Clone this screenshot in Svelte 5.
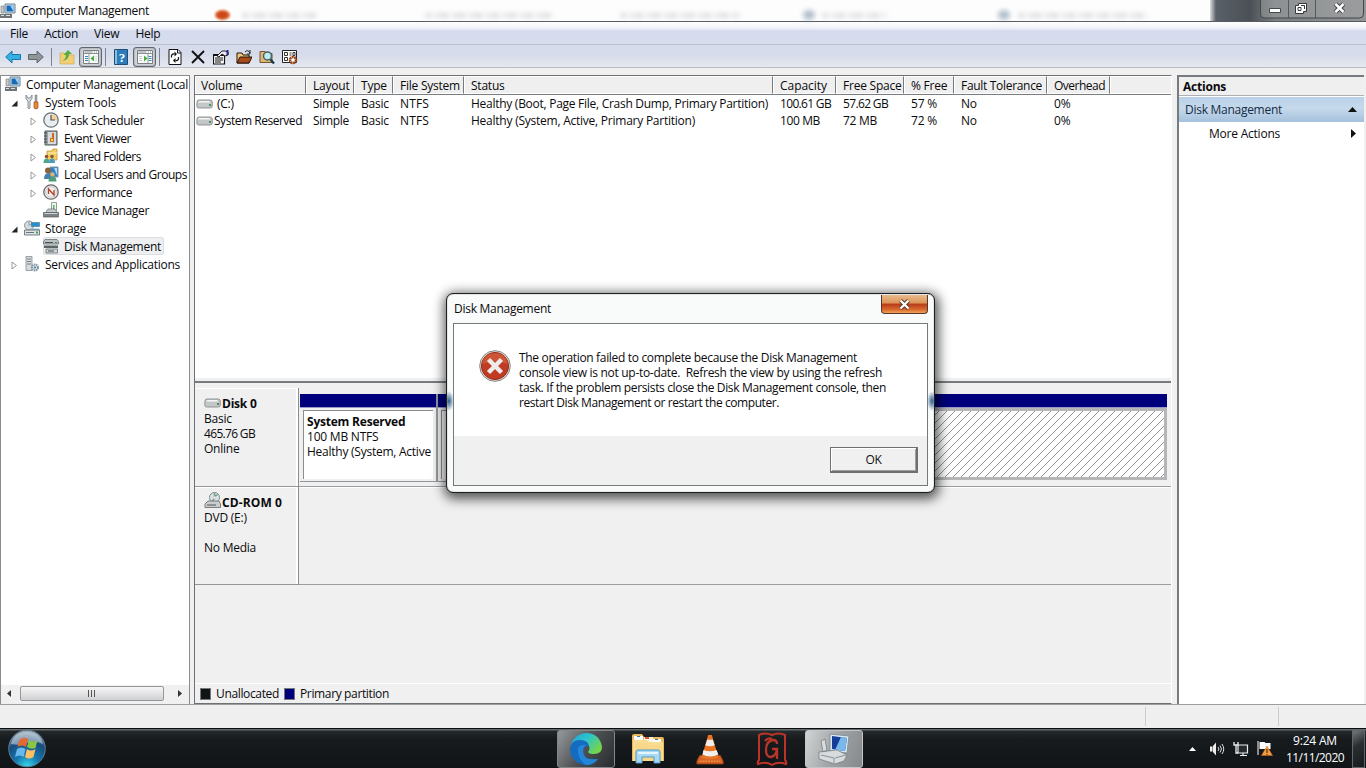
<script lang="ts">
	const menus = ['File', 'Action', 'View', 'Help'];

	const tree = [
		{ label: 'Computer Management (Local', icon: 'computer', level: 0, arrow: '' },
		{ label: 'System Tools', icon: 'tools', level: 1, arrow: 'open' },
		{ label: 'Task Scheduler', icon: 'clock', level: 2, arrow: 'closed' },
		{ label: 'Event Viewer', icon: 'event', level: 2, arrow: 'closed' },
		{ label: 'Shared Folders', icon: 'shared', level: 2, arrow: 'closed' },
		{ label: 'Local Users and Groups', icon: 'users', level: 2, arrow: 'closed' },
		{ label: 'Performance', icon: 'perf', level: 2, arrow: 'closed' },
		{ label: 'Device Manager', icon: 'device', level: 2, arrow: '' },
		{ label: 'Storage', icon: 'storage', level: 1, arrow: 'open' },
		{ label: 'Disk Management', icon: 'disks', level: 2, arrow: '', selected: true },
		{ label: 'Services and Applications', icon: 'services', level: 1, arrow: 'closed' }
	];

	const columns = ['Volume', 'Layout', 'Type', 'File System', 'Status', 'Capacity', 'Free Space', '% Free', 'Fault Tolerance', 'Overhead'];

	const volumes = [
		[' (C:)', 'Simple', 'Basic', 'NTFS', 'Healthy (Boot, Page File, Crash Dump, Primary Partition)', '100.61 GB', '57.62 GB', '57 %', 'No', '0%'],
		['System Reserved', 'Simple', 'Basic', 'NTFS', 'Healthy (System, Active, Primary Partition)', '100 MB', '72 MB', '72 %', 'No', '0%']
	];

	const message = [
		'The operation failed to complete because the Disk Management',
		'console view is not up-to-date.  Refresh the view by using the refresh',
		'task. If the problem persists close the Disk Management console, then',
		'restart Disk Management or restart the computer.'
	];

	const widths: Record<string, number> = {
		'Computer Management': 128,
		'Computer Management (Local': 162,
		'System Tools': 71,
		'Task Scheduler': 80,
		'Event Viewer': 67,
		'Shared Folders': 77,
		'Local Users and Groups': 123,
		Performance: 68,
		'Device Manager': 85,
		Storage: 41,
		'Disk Management': 97,
		'Services and Applications': 135,
		'File System': 60,
		'Fault Tolerance': 81,
		Overhead: 51,
		Capacity: 47,
		Simple: 36,
		NTFS: 29,
		[volumes[0][4]]: 297,
		[volumes[1][4]]: 224,
		'System Reserved': 88,
		'100.61 GB': 51,
		'57.62 GB': 45,
		'100 MB': 40,
		'72 MB': 34,
		'465.76 GB': 51,
		'CD-ROM 0': 60,
		'No Media': 52,
		Unallocated: 63,
		'Primary partition': 89,
		[message[0]]: 338,
		[message[1]]: 363,
		[message[2]]: 367,
		[message[3]]: 260,
		'9:24 AM': 44,
		'11/11/2020': 58
	};

	// Spreads the letters of a label over its width
	function fit(node: HTMLElement, text: string) {
		const width = widths[text];
		if (!width) return;
		const range = document.createRange();
		range.selectNodeContents(node);
		const base = parseFloat(getComputedStyle(node).letterSpacing) || 0;
		const spacing = base + (width - range.getBoundingClientRect().width) / text.length;
		node.style.letterSpacing = `${spacing.toFixed(3)}px`;
	}

	let dialogOpen = $state(true);
</script>

{#snippet label(text: string)}
	<span class="label" use:fit={text}>{text}</span>
{/snippet}

{#snippet icon(name: string)}
	<svg class="icon" viewBox="0 0 16 16" width="16" height="16" aria-hidden="true">
		{#if name === 'computer'}
			<path d="M5 1h10v9H5z" fill="#d8e4ee" stroke="#68808f" />
			<path d="M6.500 2.500h7v6h-7z" fill="#1769b9" />
			<path d="M10 2.500h3.500v6z" fill="#9bd1f2" />
			<path d="M1 3h3v7H1z" fill="#c5c9cb" stroke="#777" stroke-width=".6" />
			<path d="M0 11h12v4H0z" fill="#6c7477" />
			<path d="M1 12h3v1H1zM6 12h4v1H6z" fill="#dce0e2" />
		{:else if name === 'tools'}
			<path d="M2 1v4l2 2v7q1 2 2 0V7l2-2V1L6 4H4z" fill="#d8dcde" stroke="#747c80" stroke-width=".8" />
			<path d="M11 1h2v7h-2z" fill="#a2a8aa" stroke="#777" stroke-width=".5" />
			<path d="M10 8h4v6q-2 2-4 0z" fill="#e58a37" stroke="#9b4f1c" stroke-width=".7" />
		{:else if name === 'clock'}
			<circle cx="8" cy="8" r="7.200" fill="#e8edef" stroke="#6b7276" stroke-width="1.300" />
			<path d="M8 8V2a6 6 0 0 1 6 6z" fill="#f7cf93" />
			<path d="M8 3v5h4" fill="none" stroke="#455865" stroke-width="1.200" />
		{:else if name === 'event'}
			<path d="M2 1h12v14H2z" fill="#9ba3a7" stroke="#555d61" />
			<path d="M5 2h8v12H5z" fill="#d6dadb" />
			<path d="M1 3h3M1 6h3M1 9h3M1 12h3" stroke="#3e4447" />
			<path d="M9 3h2v5H9zM7 8h4v4H7z" fill="#d26a1e" />
			<path d="M8 9h2v2H8z" fill="#ffdf73" />
		{:else if name === 'shared'}
			<path d="M4 3h5l1-2h4v11H4z" fill="#f4cc62" stroke="#c69a3a" stroke-width=".8" />
			<path d="M5 5h9" stroke="#fff0b0" />
			<circle cx="3.500" cy="8.500" r="1.800" fill="#8a5730" />
			<circle cx="9" cy="8.500" r="1.800" fill="#8a5730" />
			<path d="M.5 15q0-4.500 3-4.500t3 4.500z" fill="#4ba68a" />
			<path d="M6 15q0-4.500 3-4.500t3 4.500z" fill="#4c97c4" />
		{:else if name === 'users'}
			<path d="M7 1h8v10H7z" fill="#2f83cb" stroke="#8496a2" />
			<path d="M11 2h3v7z" fill="#b2def6" />
			<circle cx="5" cy="4.500" r="3" fill="#8a6238" />
			<path d="M1 13q0-6 4.500-6t5 6z" fill="#477fae" />
			<circle cx="9.500" cy="8.500" r="2.200" fill="#ddb276" />
			<path d="M5.500 15.500q0-5 4-5t4 5z" fill="#4e9c78" />
		{:else if name === 'perf'}
			<circle cx="8" cy="8" r="7.200" fill="#f2eeee" stroke="#6c6a6a" stroke-width="1.300" />
			<circle cx="8" cy="8" r="5.300" fill="none" stroke="#ccc" />
			<path d="M5.500 10V5l5.500 6V6" fill="none" stroke="#b34127" stroke-width="1.300" />
		{:else if name === 'device'}
			<path d="M8.500.5h5v8h-5z" fill="#eef6ed" stroke="#88a58c" />
			<path d="M10 3h1.500v5H10z" fill="#62ad6d" />
			<path d="M3 10l2-3h7l2 3v1H3z" fill="#c3c8ca" stroke="#6a7174" stroke-width=".7" />
			<path d="M.500 10.500h15V15H.5z" fill="#7b8386" stroke="#53595c" stroke-width=".7" />
			<path d="M1.500 11.500h13" stroke="#cfd5d6" />
		{:else if name === 'storage'}
			<circle cx="5" cy="5.500" r="4.500" fill="#d3dadd" stroke="#777f83" stroke-width=".8" />
			<path d="M5 1.500v4l3-2" fill="none" stroke="#93a9b3" />
			<path d="M7.500 2.500h8v4h-8z" fill="#268fcf" stroke="#456e89" stroke-width=".6" />
			<path d="M8 8.500h7.500v3H8z" fill="#8db7d2" />
			<path d="M.5 10h15v5H.5z" fill="#dce1e3" stroke="#596268" stroke-width=".8" />
			<path d="M2 12h8v1H2z" fill="#687278" />
			<path d="M12 11.500h2v2h-2z" fill="#35a84c" />
		{:else if name === 'disks'}
			<path d="M2 1.500h12l1.500 2v2.500H.5V3.500z" fill="#bcc2c4" stroke="#585f62" stroke-width=".7" />
			<path d="M1 7.500h14v2.500H1z" fill="#5c6467" />
			<path d="M3 11h11.500v4H3z" fill="#d1d6d8" stroke="#585f62" stroke-width=".7" />
			<path d="M2 4.500h8M5 13h6" stroke="#495054" />
			<path d="M12 4h2v1h-2z" fill="#309a44" />
		{:else if name === 'services'}
			<path d="M2 .5h6v14H2z" fill="#d6dbdd" stroke="#7a8387" stroke-width=".7" />
			<path d="M3 3h4M3 5.500h4M3 8h4" stroke="#788186" />
			<circle cx="11" cy="11.500" r="3" fill="#dce8ee" stroke="#7f98a8" stroke-width="2" stroke-dasharray="1.500 .6" />
			<circle cx="11" cy="11.500" r="1" fill="#526c7c" />
		{:else if name === 'back' || name === 'forward'}
			<path
				d="M0.700 8L7 2v3.500h8.500v5H7V14z"
				transform={name === 'forward' ? 'translate(16) scale(-1 1)' : undefined}
				fill={name === 'back' ? '#35b0e5' : '#8f969a'}
				stroke={name === 'back' ? '#1d74ab' : '#5f666a'}
			/>
		{:else if name === 'up'}
			<path d="M1 4h4l2 2h8v9H1z" fill="#f1cf76" stroke="#cfab51" stroke-width=".7" />
			<path d="M3 12q4-2 4-6H4.500L9 1l4 4h-3q0 6-7 7" fill="#59ad3d" />
		{:else if name === 'panel-left' || name === 'panel-right'}
			<path d="M.5 1.500h15v13H.5z" fill="#f9fafa" stroke="#798084" />
			<path d="M1 4.500h14M11 3h1m1 0h1M1.500 3h8" stroke="#8b9296" />
			<path d="M2 7.500h3M2 9.500h3M2 11.500h3" stroke={name === 'panel-left' ? '#3489c4' : '#ccc'} />
			<path d="M11.500 7.500h3M11.500 9.500h3M11.500 11.500h3" stroke={name === 'panel-left' ? '#ddd' : '#3489c4'} />
			<path d={name === 'panel-left' ? 'M11 6.500v6l-3.500-3z' : 'M7 6.500v6l3.500-3z'} fill="#43ae3d" />
			<path d={name === 'panel-left' ? 'M6 5v9' : 'M11 5v9'} stroke="#999" />
		{:else if name === 'help'}
			<path d="M1.500.5h13v15h-13z" fill="#2c7cbc" stroke="#214d7b" />
			<path d="M2 1h2v14H2z" fill="#88bee0" />
			<text x="9" y="12.500" text-anchor="middle" class="question">?</text>
		{:else if name === 'refresh'}
			<path d="M2 .5h9l3 3v12H2z" fill="#fff" stroke="#111" />
			<path d="M10.500.5V4H14" fill="none" stroke="#111" />
			<path d="M4.500 8.500q-.5-4 3-3.500M11.500 8q.5 4-3 3.500" fill="none" stroke="#111" stroke-width="1.200" />
			<path d="M7.500 2.500v5l2.500-2.500zM8.500 9v5L6 11.500z" fill="#111" />
		{:else if name === 'delete'}
			<path d="M2 2l12 12M14 2L2 14" stroke="#111" stroke-width="1.900" />
		{:else if name === 'properties'}
			<path d="M.5 5.500h11v9.500H.5z" fill="#fff" stroke="#111" stroke-width="1.200" />
			<path d="M1 6.500h10M2 9h8M2 11h8M2 13h6" stroke="#111" stroke-width="1.200" />
			<path d="M4 7l5-5h3l3 1v3l-3 1-3-2-3 3z" fill="#eceaf0" stroke="#222" />
			<path d="M13.500 1h2v5h-2z" fill="#28248b" />
		{:else if name === 'open'}
			<path d="M1 4h5l1 2h6v8H1z" fill="#f0c67e" stroke="#251408" />
			<path d="M1 14l3-6h12l-3 6z" fill="#a94a18" stroke="#251408" />
			<path d="M9 3q3-3 5 1m0-3v4h-3" fill="none" stroke="#222" />
		{:else if name === 'search'}
			<path d="M1 2.500h5l1 2h6v9H1z" fill="#dfb675" stroke="#74532f" />
			<circle cx="8.500" cy="7" r="4" fill="#bcebf2" stroke="#476066" stroke-width="1.500" />
			<path d="M11.500 10.500l3.500 4" stroke="#153a50" stroke-width="2.300" />
		{:else if name === 'settings'}
			<path d="M.5 1.500h14v12H.5z" fill="#fff" stroke="#222" />
			<path d="M2.500 3.500h3v3h-3zM2.500 8.500h3v3h-3zM7.500 4h2M7.500 6h2M11 3.500h2v3h-2z" fill="none" stroke="#333" />
			<circle cx="11" cy="11" r="3" fill="#fff" stroke="#94461c" stroke-width="2.500" stroke-dasharray="2 .5" />
		{/if}
	</svg>
{/snippet}

{#snippet drive(cd = false)}
	<svg class="drive" viewBox="0 0 17 16" width="17" height="16" aria-hidden="true">
		{#if cd}
			<circle cx="10.500" cy="5.500" r="5" fill="#dce5e4" stroke="#7d8989" />
			<path d="M10.500 1v3l3-1M10 7l-2 3" fill="none" stroke="#6fa487" stroke-width="1.500" />
			<circle cx="10.500" cy="5.500" r="1.300" fill="#fff" stroke="#8e9c9c" stroke-width=".5" />
			<path d="M1 12l3-3h11l1.500 3v3.500H1z" fill="#c8cccc" stroke="#626969" stroke-width=".8" />
			<path d="M3 13h9" stroke="#505858" />
		{:else}
			<path d="M1 6q0-2 2-2h11q2 0 2.300 2v4q0 2-2 2H2.500Q1 12 .8 10z" fill="#c4c7c7" stroke="#7c8080" stroke-width=".8" />
			<path d="M2 6.500q0-1.500 2-1.500h9q1 0 1 1.500z" fill="#f4f5f5" />
			<path d="M13 8h2v2h-2z" fill="#4d8f5d" />
		{/if}
	</svg>
{/snippet}

<div class="desktop">
	<header class="titlebar">
		{@render icon('computer')}
		{@render label('Computer Management')}
		<i class="ghost orange"></i>
		<i class="ghost g1"></i>
		<i class="ghost g2"></i>
		<i class="ghost g3"></i>
		<i class="ghost dot d1"></i>
		<i class="ghost g4"></i>
		<i class="ghost dot d2"></i>
		<i class="ghost g5"></i>
		<div class="glass">
			<svg width="104" height="19" viewBox="0 0 104 19" aria-hidden="true">
				<path d="M.5 0v14q0 4 4 4h95q4 0 4-4V0" fill="#a5a7a8" fill-opacity=".45" stroke="#42474a" />
				<path d="M28.500 0v18M55.500 0v18" stroke="#55595c" />
				<path d="M9.500 8.500h11v4h-11z" fill="#fff" stroke="#44494c" />
				<path d="M38.500 3.500h8v8h-3v2h-8v-8h3z" fill="#fff" stroke="#34393c" />
				<path d="M38 7.500h3v3h-3zM41 5.500h3.500V9" fill="none" stroke="#34393c" />
				<path d="M75.500 4l8 8m0-8l-8 8" stroke="#363b3e" stroke-width="4.500" />
				<path d="M75.500 4l8 8m0-8l-8 8" stroke="#fff" stroke-width="2.500" />
			</svg>
		</div>
	</header>

	<nav class="menubar">
		{#each menus as menu}
			<span>{menu}</span>
		{/each}
	</nav>

	<div class="toolbar">
		{@render icon('back')}
		<span class="second">{@render icon('forward')}</span>
		<i class="sep"></i>
		{@render icon('up')}
		<span class="pressed">{@render icon('panel-left')}</span>
		<i class="sep near"></i>
		{@render icon('help')}
		<span class="pressed">{@render icon('panel-right')}</span>
		<i class="sep near"></i>
		<div class="actions-icons">
			{#each ['refresh', 'delete', 'properties', 'open', 'search', 'settings'] as name}
				{@render icon(name)}
			{/each}
		</div>
	</div>

	<main class="workspace">
		<aside class="tree">
			<div class="nodes">
				{#each tree as node}
					<div class="node level{node.level}">
						<span class="twisty">
							{#if node.arrow === 'open'}
								<svg width="7" height="7" viewBox="0 0 7 7"><path d="M6.500.5v6h-6z" fill="#222" /></svg>
							{:else if node.arrow === 'closed'}
								<svg width="7" height="9" viewBox="0 0 7 9"><path d="M1 1v7l4.500-3.500z" fill="#fff" stroke="#999" /></svg>
							{/if}
						</span>
						<span class="item" class:selected={node.selected}>
							{@render icon(node.icon)}
							{@render label(node.label)}
						</span>
					</div>
				{/each}
			</div>
			<div class="scrollbar">
				<svg width="5" height="7" viewBox="0 0 5 7"><path d="M4 0v7L0 3.500z" fill="#333" /></svg>
				<div class="thumb"><i></i><i></i><i></i></div>
				<svg width="5" height="7" viewBox="0 0 5 7"><path d="M1 0v7l4-3.500z" fill="#333" /></svg>
			</div>
		</aside>

		<section class="center">
			<div class="volumes">
				<div class="row head">
					{#each columns as column}
						<span class="cell">{@render label(column)}</span>
					{/each}
					<span class="cell"></span>
				</div>
				{#each volumes as volume}
					<div class="row">
						{#each volume as value, i}
							<span class="cell">{#if i === 0}{@render drive()}{/if}{@render label(value)}</span>
						{/each}
					</div>
				{/each}
			</div>
			<div class="splitter"></div>
			<div class="disks">
				<div class="disk first">
					<div class="disk-info">
						<b>{@render drive()}{@render label('Disk 0')}</b>
						<span>Basic</span>
						{@render label('465.76 GB')}
						<span>Online</span>
					</div>
					<div class="partitions">
						<div class="partition reserved">
							<div class="band"></div>
							<div class="box">
								<b>System Reserved</b>
								<span>100 MB NTFS</span>
								<span class="status">Healthy (System, Active</span>
							</div>
						</div>
						<div class="partition system">
							<div class="band"></div>
							<div class="box"></div>
						</div>
						<div class="partition hatched">
							<div class="band"></div>
							<div class="box">
								<svg width="100%" height="100%">
									<defs>
										<pattern id="hatch" width="8" height="8" patternUnits="userSpaceOnUse">
											<path d="M-1 9L9-1M-1 1L1-1M7 9L9 7" stroke="#777" stroke-width=".8" />
										</pattern>
									</defs>
									<rect width="100%" height="100%" fill="url(#hatch)" />
								</svg>
							</div>
						</div>
					</div>
				</div>
				<div class="disk second-disk">
					<div class="disk-info">
						<b>{@render drive(true)}{@render label('CD-ROM 0')}</b>
						<span>DVD (E:)</span>
						<span>&nbsp;</span>
						{@render label('No Media')}
					</div>
					<div class="partitions empty"></div>
				</div>
			</div>
			<div class="legend">
				<i class="swatch black"></i>{@render label('Unallocated')}
				<i class="swatch navy"></i>{@render label('Primary partition')}
			</div>
		</section>

		<aside class="actions">
			<h2>Actions</h2>
			<div class="group">
				{@render label('Disk Management')}
				<svg width="9" height="5" viewBox="0 0 9 5"><path d="M0 5h9L4.500 0z" fill="#111" /></svg>
			</div>
			<div class="more">
				<span>More Actions</span>
				<svg width="5" height="9" viewBox="0 0 5 9"><path d="M0 0v9l5-4.500z" fill="#111" /></svg>
			</div>
		</aside>
	</main>

	<div class="statusbar"><i></i><i></i></div>

	<footer class="taskbar">
		<svg class="orb" width="40" height="39" viewBox="0 0 40 39" aria-hidden="true">
			<defs>
				<radialGradient id="orb" cx=".5" cy="1" r="1">
					<stop offset="0" stop-color="#38dcec" />
					<stop offset=".35" stop-color="#1677ae" />
					<stop offset=".7" stop-color="#184c7d" />
					<stop offset="1" stop-color="#a5b3bd" />
				</radialGradient>
			</defs>
			<circle cx="20" cy="19.500" r="18.300" fill="url(#orb)" stroke="#5d7d91" />
			<path d="M4 15q3-12 16-12t16 12q-8-4-16-1t-16 1" fill="#e2e8eb" opacity=".5" />
			<path d="M12.500 11q4.500-4 8.500-1l-2 8q-4-3-8.500 0z" fill="#e56a32" />
			<path d="M22 11q4 3 8.500 0l-2 8q-4.500 2-8.500-1z" fill="#8ac543" />
			<path d="M10 20q4.500-3 8.500 0l-2 8q-4-3-8.500 0z" fill="#69b9ee" />
			<path d="M20 20q4 3 8.500 0l-2 8q-4.500 3-8.500 0z" fill="#ffc065" />
		</svg>
		<div class="apps">
			<div class="app active">
				<svg width="34" height="34" viewBox="0 0 34 34" aria-hidden="true">
					<defs>
						<linearGradient id="edge" x1="0" x2="1" y2=".6">
							<stop offset="0" stop-color="#229ed8" />
							<stop offset=".5" stop-color="#2cc5cc" />
							<stop offset="1" stop-color="#76d448" />
						</linearGradient>
					</defs>
					<path d="M2 13Q6 1 18 1q13 1 15 14 0 7-8 7-5 0-6-2 3-4 0-7-6-5-17 0" fill="url(#edge)" />
					<path d="M1 17q1-9 10-9 8 0 9 6-6-1-6 6 1 9 15 7-5 7-13 6Q1 30 1 17" fill="#146bc0" />
					<path d="M9 16q-1 11 8 17 8 0 12-6-14 2-15-7 0-5 3-7-6-1-8 3" fill="#2386d8" />
				</svg>
			</div>
			<div class="app">
				<svg width="34" height="32" viewBox="0 0 34 32" aria-hidden="true">
					<path d="M1 3q0-2 2-2h8l2 3h18q2 0 2 2v22H1z" fill="#e7b95c" />
					<path d="M3 3h9v8H3z" fill="#fff" />
					<path d="M6 3h3v1H6z" fill="#397ca2" />
					<path d="M13 4h9v7h-9z" fill="#fff3e0" />
					<path d="M14 4h4v2h-4z" fill="#df5738" />
					<path d="M22 6h8v4h-8z" fill="#fff" />
					<path d="M24 6h3v1h-3z" fill="#397ca2" />
					<path d="M2 7h14l2 2h14v19H2z" fill="#fadd93" />
					<path d="M4 10h11l2 2h14v16H4z" fill="#f8d68a" />
					<path d="M5 19q0-2 2-2h20q2 0 2 2v11h-6v-6H11v6H5z" fill="#a9d8f4" stroke="#4d9ac7" />
					<path d="M7 19h20v2H7z" fill="#e3f6ff" />
				</svg>
			</div>
			<div class="app">
				<svg width="28" height="32" viewBox="0 0 30 34" aria-hidden="true">
					<path d="M4 24h22l3 6v3H1v-3z" fill="#d76423" stroke="#9f4319" />
					<path d="M13 2h4l7 24q-8 4-18 0z" fill="#e87426" />
					<path d="M12 7h6l2 6q-5 2-10 0zM8 18q7 3 14 0l2 5q-9 4-17 0z" fill="#f1efec" />
					<path d="M4 30h22" stroke="#ffa75c" stroke-dasharray="2 1" />
				</svg>
			</div>
			<div class="app">
				<svg width="32" height="34" viewBox="0 0 32 34" aria-hidden="true">
					<path d="M3 3q6-3 13 0 7-3 13 0v25q2 2 1 4-8-3-14 1-6-4-14-1-1-2 1-4z" fill="none" stroke="#bd3427" stroke-width="2" />
					<path d="M21 12q0-4-4-4-7 1-7 10 0 7 5 7 5-1 6-8h-5m5 0v10M9 9q3-4 7-2" fill="none" stroke="#b83528" stroke-width="2.300" />
				</svg>
			</div>
			<div class="app active bright">
				<svg width="34" height="32" viewBox="0 0 34 32" aria-hidden="true">
					<path d="M13 1l19 2-2 17-17-2z" fill="#dbe6ef" stroke="#8193a1" />
					<path d="M15 3l15 2-2 13-13-2z" fill="#153d99" />
					<path d="M24 4l6 1-2 13-10-1z" fill="#79b8eb" />
					<path d="M4 8l4-2 2 11-4 2zM2 19l18-2 10 5-3 6-9 3L2 26z" fill="#d8dcde" stroke="#797f82" stroke-width=".8" />
					<path d="M4 22l13 3v5M18 25l11-3" fill="none" stroke="#899195" />
				</svg>
			</div>
		</div>
		<div class="tray">
			<svg width="7" height="4" viewBox="0 0 7 4"><path d="M0 4h7L3.500 0z" fill="#fff" /></svg>
			<svg width="16" height="14" viewBox="0 0 16 14">
				<path d="M1 4.500h2.500v5H1zM4 4l3-3.500v13L4 10z" fill="#eee" />
				<path d="M9 5q2 2 0 4M11 3.500q3 3.500 0 7M13 2q3.500 5 0 10" fill="none" stroke="#ddd" />
			</svg>
			<svg width="16" height="14" viewBox="0 0 16 14">
				<path d="M5 3h9.500v8H5zM7 13.500h7M10 11v2" fill="#252b2e" stroke="#eee" stroke-width="1.200" />
				<path d="M1 0v3h4V0M3 3v8h2" fill="none" stroke="#eee" stroke-width="1.300" />
			</svg>
			<svg width="16" height="15" viewBox="0 0 16 15">
				<path d="M1 0v14" stroke="#fff" />
				<path d="M2.500 1h5l1 1h5v6h-11z" fill="#fff" />
				<path d="M10 5l5.500 9.500h-11z" fill="#f2a03f" stroke="#cc6920" stroke-width=".5" />
				<path d="M10 8v4m0 1v1" stroke="#643415" stroke-width="1.300" />
			</svg>
		</div>
		<div class="time">
			{@render label('9:24 AM')}
			{@render label('11/11/2020')}
		</div>
		<div class="show-desktop"></div>
	</footer>

	{#if dialogOpen}
		<div class="dialog" role="alertdialog" aria-label="Disk Management">
			<div class="dialog-title">
				{@render label('Disk Management')}
				<button class="close" aria-label="Close" onclick={() => (dialogOpen = false)}>
					<svg width="13" height="11" viewBox="0 0 13 11">
						<path d="M2.500 1.500l8 8m0-8l-8 8" stroke="#59352b" stroke-width="4" />
						<path d="M2.500 1.500l8 8m0-8l-8 8" stroke="#fff" stroke-width="2.300" />
					</svg>
				</button>
			</div>
			<div class="dialog-frame">
				<div class="dialog-body">
					<svg width="32" height="32" viewBox="0 0 32 32" aria-hidden="true">
						<circle cx="16" cy="16" r="15.300" fill="#e5e3e1" stroke="#85837f" />
						<circle cx="16" cy="16" r="13.600" fill="#bf3b23" stroke="#942b1b" />
						<path d="M3 14q2-11 13-11t13 11q-13-5-26 0" fill="#d86a43" opacity=".55" />
						<path d="M9.500 9.500l13 13m0-13l-13 13" stroke="#eeeceb" stroke-width="4.500" />
					</svg>
					<div class="message">
						{#each message as line}
							{@render label(line)}
						{/each}
					</div>
				</div>
				<div class="dialog-buttons">
					<button class="ok" onclick={() => (dialogOpen = false)}>OK</button>
				</div>
			</div>
		</div>
	{/if}
</div>

<style>
	:global(body) {
		margin: 0;
		overflow: hidden;
	}

	.desktop {
		position: relative;
		display: flex;
		flex-direction: column;
		width: 1366px;
		height: 768px;
		overflow: hidden;
		background: #f0f0f0;
		color: #0a0a0c;
		font-family: 'Open Sans', 'Noto Sans', sans-serif;
		font-size: 12px;
		letter-spacing: -0.22px;
		line-height: 15px;
		white-space: nowrap;
	}

	.desktop * {
		box-sizing: border-box;
	}

	svg {
		display: block;
		flex: none;
	}

	.label {
		white-space: pre;
	}

	.question {
		font: bold 13px 'Liberation Serif', serif;
		fill: #fff;
	}

	.titlebar {
		position: relative;
		display: flex;
		align-items: center;
		height: 22px;
		gap: 5px;
		border-bottom: 1px solid #555b60;
		background: #fdfdfd;
	}

	.glass {
		display: flex;
		justify-content: flex-end;
		width: 156px;
		height: 21px;
		margin-left: auto;
		padding-right: 2px;
		background: linear-gradient(90deg, #ddd 0, #596068 6px, #4b5056 40px, #7d8082 65px, #939596);
	}

	.ghost {
		position: absolute;
		top: 13px;
		width: 75px;
		height: 5px;
		border-radius: 3px;
		background: repeating-linear-gradient(90deg, #bbb 0 5px, #eee 7px 9px, #ccc 12px 17px);
		filter: blur(2.5px);
		opacity: 0.5;
	}

	.ghost.orange {
		left: 215px;
		top: 10px;
		width: 15px;
		height: 10px;
		border-radius: 50%;
		background: radial-gradient(#c9451a 30%, #f08a3c);
		filter: blur(1px);
		opacity: 1;
	}

	.ghost.dot {
		top: 10px;
		width: 12px;
		height: 10px;
		border-radius: 50%;
		background: #8fa3b5;
		opacity: 0.7;
	}

	.d1 { left: 803px; }
	.d2 { left: 998px; }
	.g1 { left: 242px; }
	.g2 { left: 425px; width: 130px; }
	.g3 { left: 620px; width: 120px; }
	.g4 { left: 822px; width: 65px; }
	.g5 { left: 1018px; width: 130px; }

	.menubar {
		display: flex;
		align-items: center;
		height: 23px;
		padding: 0 10px;
		gap: 16px;
		border-bottom: 1px solid #bcc0c9;
		background: linear-gradient(#fff 0, #f0f3fa 6px, #d5dbed 9px, #d7dded);
	}

	.toolbar {
		display: flex;
		align-items: center;
		height: 23px;
		padding: 2px 0 0 5px;
		border-bottom: 1px solid #b9bdc6;
		background: linear-gradient(#d6dced, #d5dbea 40%, #e5e8ef);
	}

	.second {
		margin-left: 7px;
	}

	.sep {
		width: 1px;
		height: 18px;
		margin: 0 7px;
		background: #7d838c;
	}

	.sep.near {
		margin-left: 3px;
		margin-right: 7px;
	}

	.pressed {
		display: flex;
		align-items: center;
		justify-content: center;
		width: 23px;
		height: 20px;
		margin-left: 4px;
		border: 1px solid #60666b;
		border-radius: 3px;
		background: #d1d5dc;
		box-shadow: inset 0 0 2px #777;
	}

	.actions-icons {
		display: flex;
		gap: 7px;
	}

	.workspace {
		display: flex;
		height: 637px;
		padding: 7px 2px 0 0;
		border-bottom: 1px solid #9b9da0;
	}

	.tree {
		display: flex;
		flex-direction: column;
		width: 190px;
		border: 1px solid #888c91;
		border-bottom: 0;
		background: #fff;
		overflow: hidden;
	}

	.nodes {
		flex: 1;
		margin-top: -1px;
	}

	.node {
		display: flex;
		height: 18px;
		align-items: center;
	}

	.twisty {
		display: flex;
		flex: none;
		justify-content: center;
		width: 9px;
		margin-right: 5px;
		padding-top: 2px;
	}

	.level0 .twisty {
		width: 0;
		margin-right: 4px;
	}

	.level1 {
		padding-left: 9px;
	}

	.level2 {
		padding-left: 28px;
	}

	.item {
		display: flex;
		align-items: center;
		height: 18px;
		gap: 5px;
		padding-right: 3px;
	}

	.item.selected {
		border-radius: 3px;
		background: #eeeff1;
		box-shadow: inset 0 0 0 1px #dadcdf;
	}

	.scrollbar {
		display: flex;
		align-items: center;
		justify-content: space-between;
		height: 19px;
		padding: 0 7px 2px 6px;
		background: #f0f0f1;
	}

	.thumb {
		display: flex;
		align-items: center;
		justify-content: center;
		width: 144px;
		height: 15px;
		margin-right: 6px;
		gap: 2px;
		border: 1px solid #94979a;
		border-radius: 2px;
		background: linear-gradient(#f6f6f6, #e4e4e6 50%, #cfd0d3);
	}

	.thumb i {
		width: 1px;
		height: 7px;
		background: #555;
	}

	.center {
		display: flex;
		flex-direction: column;
		flex: none;
		width: 978px;
		margin-left: 4px;
		border: 1px solid #6d7175;
		border-right-color: #fff;
	}

	.volumes {
		height: 302px;
		background: #fff;
	}

	.row {
		display: grid;
		grid-template-columns: 111px 48px 39px 71px 309px 63px 68px 50px 93px 63px 1fr;
		height: 17px;
		align-items: center;
	}

	.row.head {
		height: 19px;
		background: #efefef;
		border-bottom: 1px solid #797d80;
	}

	.cell {
		display: flex;
		align-items: center;
		padding-left: 7px;
	}

	.head .cell {
		height: 18px;
		padding-left: 6px;
		border: 1px solid #fff;
		border-right-color: #777a7d;
	}

	.head .cell:first-child {
		padding-left: 5px;
	}

	.head .cell:last-child {
		border-right: 0;
	}

	.row:not(.head) .cell:first-child {
		padding-left: 1px;
	}

	.cell .drive {
		margin-right: 1px;
	}

	.splitter {
		height: 5px;
		border-bottom: 2px solid #777b7e;
		background: #efefef;
	}

	.disks {
		height: 300px;
		padding-top: 5px;
	}

	.disk {
		display: flex;
	}

	.first {
		height: 99px;
	}

	.second-disk {
		height: 98px;
	}

	.disk-info {
		display: flex;
		flex-direction: column;
		width: 104px;
		padding: 7px 0 0 9px;
		border-right: 1px solid #8b8e91;
		border-bottom: 1px solid #939699;
		box-shadow: inset -2px 1px #fff;
	}

	.disk-info b {
		display: flex;
		align-items: center;
		height: 16px;
		gap: 1px;
	}

	.second-disk .drive {
		margin-top: -5px;
	}

	.partitions {
		display: flex;
		flex: 1;
		padding: 6px 4px 0 1px;
		border-bottom: 1px solid #9b9ea1;
	}

	.partitions.empty {
		box-shadow: inset 0 1px #fff;
	}

	.partition {
		height: 88px;
		border-right: 2px solid #94979a;
		border-bottom: 1px solid #94979a;
	}

	.band {
		height: 14px;
		border-bottom: 1px solid #9999c9;
		background: #00007c;
	}

	.reserved {
		width: 138px;
	}

	.partition .box {
		display: flex;
		flex-direction: column;
		height: 69px;
		margin: 2px 0 0 3px;
		border: 1px solid #8b8e91;
		border-right: 0;
		border-bottom: 0;
		background: #fff;
	}

	.reserved .box {
		width: 130px;
		padding: 3px 3px 0;
	}

	.reserved .status {
		letter-spacing: -0.25px;
	}

	.system {
		width: 290px;
		border-right-width: 1px;
	}

	.partition.hatched {
		flex: 1;
		border: 0;
	}

	.hatched .box {
		height: 72px;
		margin: 0;
		border: 3px solid #b5b6b8;
	}

	.legend {
		display: flex;
		align-items: center;
		flex: 1;
		padding-left: 5px;
		border-top: 1px solid #fff;
	}

	.swatch {
		width: 11px;
		height: 12px;
		margin-right: 5px;
		border: 1px solid #777;
	}

	.black {
		background: #111415;
	}

	.navy {
		margin-left: 5px;
		background: #00007c;
	}

	.actions {
		flex: 1;
		margin-left: 5px;
		border-top: 2px solid #777b7f;
		border-left: 2px solid #777b7f;
		background: #fff;
	}

	.actions h2 {
		height: 19px;
		margin: 0;
		padding: 2px 0 0 4px;
		border-bottom: 1px solid #aeb0b3;
		background: #efefef;
		font-size: 12px;
		line-height: 15px;
	}

	.group {
		display: flex;
		align-items: center;
		justify-content: space-between;
		height: 25px;
		margin-top: 1px;
		padding: 0 7px 0 6px;
		background: linear-gradient(#b9d1e8, #c6d9eb 45%, #a5c1dd);
		color: #142b46;
	}

	.more {
		display: flex;
		align-items: center;
		justify-content: space-between;
		height: 23px;
		padding: 0 8px 0 30px;
	}

	.statusbar {
		display: flex;
		justify-content: flex-end;
		height: 23px;
		gap: 132px;
		padding: 2px 87px 2px 0;
		background: #efefef;
	}

	.statusbar i {
		width: 1px;
		background: #ccc;
	}

	.taskbar {
		display: flex;
		align-items: center;
		height: 40px;
		border-top: 1px solid #0b0e10;
		background: linear-gradient(#656a6d 0 1px, #24292c 2px, #171b1e 10px, #111518);
	}

	.orb {
		margin-left: 7px;
	}

	.apps {
		display: flex;
		gap: 4px;
		margin-left: 510px;
	}

	.app {
		display: flex;
		align-items: center;
		justify-content: center;
		width: 58px;
		height: 38px;
	}

	.app.active {
		border: 1px solid #838789;
		border-radius: 3px;
		background: linear-gradient(125deg, #969a9c, #4d5154 50%, #272b2e);
	}

	.app.bright {
		background: linear-gradient(110deg, #d1d3d4, #a1a4a6 50%, #85898b);
		border-color: #c3c5c7;
	}

	.tray {
		display: flex;
		align-items: center;
		gap: 8px;
		margin-left: 326px;
	}

	.tray svg:first-child {
		margin-right: 5px;
	}

	.time {
		display: flex;
		flex-direction: column;
		align-items: center;
		width: 62px;
		margin-left: 11px;
		color: #fff;
		line-height: 17px;
	}

	.show-desktop {
		width: 13px;
		height: 38px;
		margin-left: 6px;
		border: 1px solid #616669;
		background: linear-gradient(150deg, #74787b, #2a2f32 40%, #171b1e);
	}

	.dialog {
		position: absolute;
		left: 446px;
		top: 293px;
		width: 489px;
		height: 200px;
		padding: 1px 6px 6px;
		border: 1px solid #1b1f22;
		border-radius: 7px;
		background:
			radial-gradient(ellipse 5px 10px at 2px 107px, #2d5f88, transparent),
			radial-gradient(ellipse 5px 10px at 485px 107px, #2d5f88, transparent),
			#f9fafa;
		box-shadow:
			inset 0 0 1px #333,
			1px 3px 12px 3px rgba(0, 0, 0, 0.65);
	}

	.dialog-title {
		display: flex;
		justify-content: space-between;
		height: 28px;
	}

	.dialog-title .label {
		padding: 6px 0 0 1px;
	}

	button {
		padding: 0;
		font: inherit;
		letter-spacing: inherit;
	}

	.close {
		display: flex;
		align-items: center;
		justify-content: center;
		width: 47px;
		height: 19px;
		border: 1px solid #53372d;
		border-top: 0;
		border-radius: 0 0 4px 4px;
		background: linear-gradient(#e8bb8e, #dc9457 45%, #b73b18 50%, #d8682c 80%, #f1a256);
	}

	.dialog-frame {
		height: 163px;
		border: 1px solid #76797b;
		background: #f0f0f0;
	}

	.dialog-body {
		display: flex;
		height: 112px;
		padding: 26px 0 0 25px;
		gap: 8px;
		background: #fff;
	}

	.message {
		display: flex;
		flex-direction: column;
	}

	.dialog-buttons {
		display: flex;
		justify-content: flex-end;
		padding: 11px 9px;
	}

	.ok {
		width: 88px;
		height: 26px;
		border: 1px solid #6d7072;
		border-right-width: 2px;
		border-bottom-width: 2px;
		background: #f0f0f0;
		color: #111;
		box-shadow:
			inset 1px 1px #fff,
			inset -1px -1px #a0a0a0;
	}
</style>
